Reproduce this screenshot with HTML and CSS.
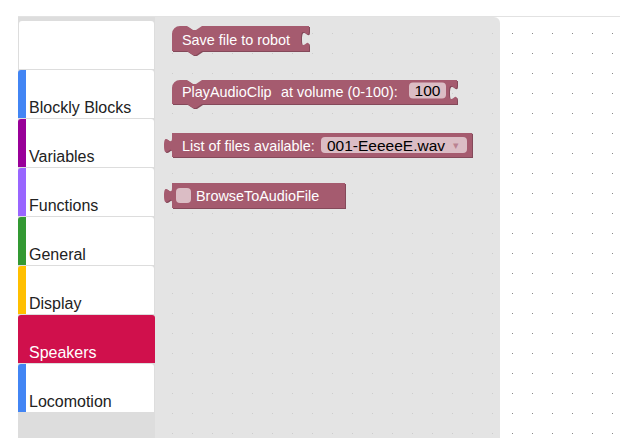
FILE: index.html
```html
<!DOCTYPE html>
<html lang="en">
<head>
<meta charset="utf-8">
<title>Blockly</title>
<link rel="stylesheet" href="styles.css">
</head>
<body>
<div class="blockly">
  <svg class="grid" width="100%" height="100%">
    <defs>
      <pattern id="dots" width="20" height="20" patternUnits="userSpaceOnUse">
        <rect x="14" y="16" width="1" height="1" fill="#888"/>
      </pattern>
    </defs>
    <rect width="100%" height="100%" fill="url(#dots)"/>
  </svg>

  <div class="toolbox">
    <div class="cat cat-blank"></div>
    <div class="cat cat-blue"><span class="cat-label">Blockly Blocks</span></div>
    <div class="cat cat-purple"><span class="cat-label">Variables</span></div>
    <div class="cat cat-violet"><span class="cat-label">Functions</span></div>
    <div class="cat cat-green"><span class="cat-label">General</span></div>
    <div class="cat cat-gold"><span class="cat-label">Display</span></div>
    <div class="cat cat-selected"><span class="cat-label">Speakers</span></div>
    <div class="cat cat-blue"><span class="cat-label">Locomotion</span></div>
  </div>

  <div class="flyout">
    <svg class="block block-save" width="160" height="32">
      <g transform="translate(10,0)">
        <path class="blk-dark" transform="translate(1,1)" d="M0,8 a8,8 0 0 1 8,-8 H15 l6,4 3,0 6,-4 H137 V5 c0,10 -8,-8 -8,7.5 s8,-2.5 8,7.5 V25 H30 l-6,4 -3,0 -6,-4 H0 Z"/>
        <path class="blk" d="M0,8 a8,8 0 0 1 8,-8 H15 l6,4 3,0 6,-4 H137 V5 c0,10 -8,-8 -8,7.5 s8,-2.5 8,7.5 V25 H30 l-6,4 -3,0 -6,-4 H0 Z"/>
        <text class="lbl" x="10" y="18.5">Save file to robot</text>
      </g>
    </svg>

    <svg class="block block-play" width="300" height="32">
      <g transform="translate(10,0)">
        <path class="blk-dark" transform="translate(1,1)" d="M0,8 a8,8 0 0 1 8,-8 H15 l6,4 3,0 6,-4 H285 V5 c0,10 -8,-8 -8,7.5 s8,-2.5 8,7.5 V24 H30 l-6,4 -3,0 -6,-4 H0 Z"/>
        <path class="blk" d="M0,8 a8,8 0 0 1 8,-8 H15 l6,4 3,0 6,-4 H285 V5 c0,10 -8,-8 -8,7.5 s8,-2.5 8,7.5 V24 H30 l-6,4 -3,0 -6,-4 H0 Z"/>
        <text class="lbl" x="10" y="17">PlayAudioClip</text>
        <text class="lbl" x="109" y="17">at volume (0-100):</text>
        <rect class="field" x="237" y="2.5" width="37" height="16" rx="4"/>
        <text class="ftxt ftxt-mid" x="255.5" y="16">100</text>
      </g>
    </svg>

    <svg class="block block-list" width="315" height="30">
      <g transform="translate(10,0)">
        <path class="blk-dark" transform="translate(1,1)" d="M0,0 H300 V24 H0 V20 c0,-10 -8,8 -8,-7.5 s8,2.5 8,-7.5 Z"/>
        <path class="blk" d="M0,0 H300 V24 H0 V20 c0,-10 -8,8 -8,-7.5 s8,2.5 8,-7.5 Z"/>
        <text class="lbl" x="10" y="18">List of files available:</text>
        <rect class="field" x="149" y="4" width="146" height="16" rx="4"/>
        <text class="ftxt" x="155" y="17.5">001-EeeeeE.wav</text>
        <text class="arrow" x="281" y="16">▾</text>
      </g>
    </svg>

    <svg class="block block-browse" width="190" height="32">
      <g transform="translate(10,0)">
        <path class="blk-dark" transform="translate(1,1)" d="M0,0 H173 V25 H0 V20 c0,-10 -8,8 -8,-7.5 s8,2.5 8,-7.5 Z"/>
        <path class="blk" d="M0,0 H173 V25 H0 V20 c0,-10 -8,8 -8,-7.5 s8,2.5 8,-7.5 Z"/>
        <rect class="field" x="4" y="5" width="15" height="15" rx="4"/>
        <text class="lbl" x="24" y="18">BrowseToAudioFile</text>
      </g>
    </svg>
  </div>
</div>
</body>
</html>
```
FILE: styles.css
```css
* { box-sizing: border-box; }

html, body {
  margin: 0;
  padding: 0;
  background: #fff;
}

body {
  padding: 16px 0 0 18px;
  width: 620px;
  height: 438px;
  overflow: hidden;
  font-family: "Liberation Sans", Arial, sans-serif;
}

.blockly {
  position: relative;
  display: flex;
  height: 422px;
  border-top: 1px solid #e2e2e2;
}

.grid {
  position: absolute;
  top: 0;
  left: 0;
}

.toolbox {
  position: relative;
  width: 137px;
  flex: 0 0 137px;
  background: #ddd;
  padding-top: 4px;
  display: flex;
  flex-direction: column;
}

.cat {
  height: 48px;
  margin: 0 1px 1px 0;
  background: #fff;
  border-left: 8px solid transparent;
  border-radius: 3px 3px 0 0;
  display: flex;
  align-items: flex-end;
  padding: 0 0 1px 3px;
}

.cat-blank {
  border-left: 0;
  margin-left: 1px;
}

.cat-label {
  font-size: 16px;
  line-height: 18px;
  color: #222;
}

.cat-blue { border-left-color: #4285f4; }
.cat-purple { border-left-color: #990099; }
.cat-violet { border-left-color: #9966ff; }
.cat-green { border-left-color: #339933; }
.cat-gold { border-left-color: #ffbf00; }

.cat-selected {
  background: #d0104c;
  border-left-color: #d0104c;
  margin-right: 0;
}

.cat-selected .cat-label { color: #fff; }

.flyout {
  position: relative;
  width: 345px;
  flex: 0 0 345px;
  background: rgba(221, 221, 221, 0.8);
  border-top-right-radius: 6px;
}

.block {
  position: absolute;
  overflow: visible;
}

.block-save { left: 7px; top: 9px; }
.block-play { left: 7px; top: 63px; }
.block-list { left: 7px; top: 116px; }
.block-browse { left: 7px; top: 166px; }

.blk { fill: #a55b6f; }
.blk-dark { fill: #84495a; }

.field {
  fill: #fff;
  fill-opacity: 0.6;
}

.lbl {
  fill: #fff;
  font-family: "Liberation Sans", Arial, sans-serif;
  font-size: 14.4px;
  white-space: pre;
}

.ftxt {
  fill: #000;
  font-family: "Liberation Sans", Arial, sans-serif;
  font-size: 15.5px;
}

.ftxt-mid { text-anchor: middle; }

.arrow {
  fill: #a55b6f;
  fill-opacity: 0.6;
  font-family: "DejaVu Sans", sans-serif;
  font-size: 11px;
}
```
